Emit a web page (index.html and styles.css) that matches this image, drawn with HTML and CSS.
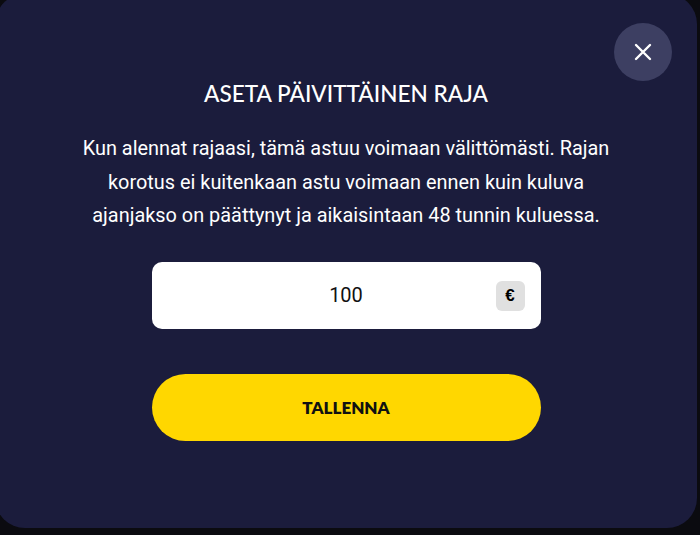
FILE: index.html
```html
<!DOCTYPE html>
<html lang="fi">
<head>
<meta charset="utf-8">
<link rel="stylesheet" href="styles.css">
</head>
<body>
<div class="modal">
  <button class="close" aria-label="Sulje">
    <svg width="18" height="18" viewBox="0 0 18 18"><path d="M2 2L16 16M16 2L2 16" stroke="#fff" stroke-width="2.4" stroke-linecap="round"/></svg>
  </button>
  <h1 class="title">ASETA PÄIVITTÄINEN RAJA</h1>
  <p class="desc">Kun alennat rajaasi, tämä astuu voimaan välittömästi. Rajan korotus ei kuitenkaan astu voimaan ennen kuin kuluva ajanjakso on päättynyt ja aikaisintaan 48 tunnin kuluessa.</p>
  <div class="field">
    <span class="value">100</span>
    <span class="unit">€</span>
  </div>
  <button class="save">TALLENNA</button>
</div>
</body>
</html>
```
FILE: styles.css
```css
html, body {
  margin: 0;
  padding: 0;
  background: #0b0b10;
  height: 535px;
  overflow: hidden;
}
.modal {
  position: relative;
  box-sizing: border-box;
  margin: -6px 3px 0 -5px;
  height: 534px;
  border-radius: 30px;
  background: #1b1c3c;
  display: flex;
  flex-direction: column;
  align-items: center;
  padding-top: 85px;
}
.close {
  position: absolute;
  top: 29px;
  right: 25px;
  width: 58px;
  height: 58px;
  border-radius: 50%;
  border: 0;
  background: #3d3f62;
  display: flex;
  align-items: center;
  justify-content: center;
  padding: 0;
}
.title {
  margin: 0;
  font-family: Lato, "Open Sans", sans-serif;
  font-weight: 500;
  font-size: 22.6px;
  line-height: 30px;
  color: #fff;
}
.desc {
  margin: 23px 0 0;
  width: 560px;
  text-align: center;
  font-family: "Roboto", sans-serif;
  font-size: 19.9px;
  line-height: 33.5px;
  color: #fff;
}
.field {
  margin-top: 29px;
  box-sizing: border-box;
  width: 389px;
  height: 67px;
  background: #fff;
  border-radius: 10px;
  display: flex;
  align-items: center;
  position: relative;
  justify-content: center;
}
.value {
  font-family: Roboto, sans-serif;
  font-size: 20px;
  color: #111;
}
.unit {
  position: absolute;
  right: 16px;
  top: 19px;
  width: 29px;
  height: 30px;
  border-radius: 6px;
  background: #e0e0e0;
  display: flex;
  align-items: center;
  justify-content: center;
  font-family: "Liberation Sans", sans-serif;
  font-weight: 700;
  font-size: 17px;
  color: #000;
}
.save {
  margin-top: 45px;
  width: 389px;
  height: 67px;
  border: 0;
  border-radius: 34px;
  background: #ffd700;
  font-family: Lato, sans-serif;
  font-weight: 800;
  font-size: 17px;
  color: #111;
}
```
